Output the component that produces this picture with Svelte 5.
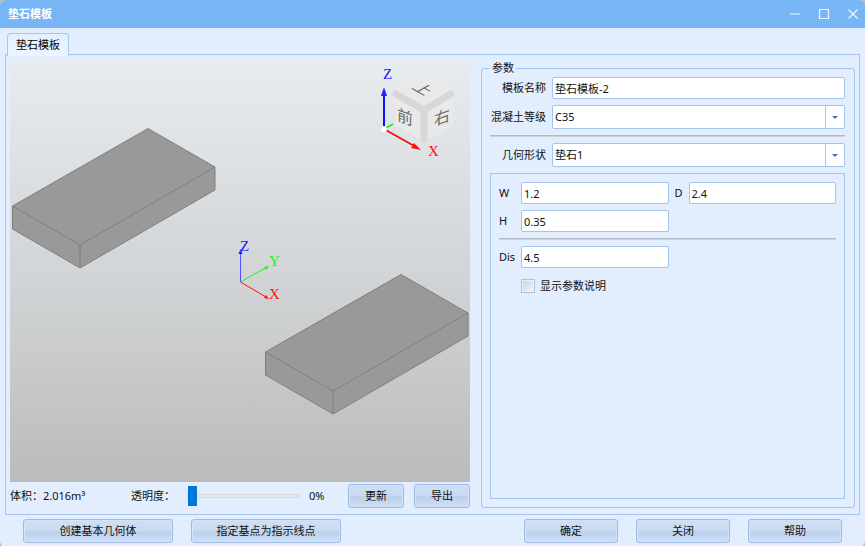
<script lang="ts">
	let name = "垫石模板-2";
	let grade = "C35";
	let shape = "垫石1";
	let opacity = 0;
	let showHelp = false;

	let size = { w: "1.2", d: "2.4", h: "0.35", dis: "4.5" };

	const slabs = [
		{ x: 2, y: 68 },
		{ x: 255, y: 214 },
	];
</script>

<main class="dialog">
	<header class="titlebar">
		<h1>垫石模板</h1>
		<div class="window-buttons">
			<button aria-label="最小化">
				<svg width="12" height="12" viewBox="0 0 12 12"><path d="M1 6h10" /></svg>
			</button>
			<button aria-label="最大化">
				<svg width="12" height="12" viewBox="0 0 12 12"><path d="M1.5 1.5h9v9h-9z" /></svg>
			</button>
			<button aria-label="关闭窗口">
				<svg width="12" height="12" viewBox="0 0 12 12"><path d="M1.5 1.5l9 9M10.5 1.5l-9 9" /></svg>
			</button>
		</div>
	</header>

	<nav class="tabs">
		<button class="tab active">垫石模板</button>
	</nav>

	<section class="panel">
		<div class="preview">
			<div class="viewport">
				<svg class="scene" viewBox="0 0 460 422">
					{#each slabs as slab}
						<g class="slab" transform="translate({slab.x} {slab.y})">
							<path d="M136 .5L203 39v23L68 140 .5 101V78z" />
							<path d="M.5 78L68 117l135-78M68 117v23" />
						</g>
					{/each}

					<g class="axes small">
						<path class="z" d="M230.5 222V192" />
						<path class="z tip" d="M230.5 189l2 5h-4z" />
						<path class="y" d="M230.5 222L257 207" />
						<path class="y tip" d="M259 206l-3 4-2-3z" />
						<path class="x" d="M230.5 222L256 237" />
						<path class="x tip" d="M259 239l-5-1 2-3z" />
						<text class="z" x="230" y="191">Z</text>
						<text class="y" x="259" y="206">Y</text>
						<text class="x" x="259" y="239">X</text>
					</g>

					<g class="cube">
						<path class="face" d="M415 12L444 31 442 66 414 82 386 64 383 31z" />
						<path class="edge" d="M386 34L414 50 441 34M414 50V79" />
						<text transform="matrix(.87 .5 -.87 .5 408 32)">上</text>
						<text transform="translate(395 63) skewY(20)">前</text>
						<text transform="translate(432 63) skewY(-20)">右</text>
					</g>

					<g class="axes big">
						<path class="y" d="M374 69l9-5" />
						<path class="z" d="M374 69V33" />
						<path class="z tip" d="M374 27l3 9h-6z" />
						<path class="x" d="M374 69l32 18" />
						<path class="x tip" d="M411 90l-10-2 3-5z" />
						<circle cx="374" cy="69" r="3" />
						<text class="z" x="373" y="19">Z</text>
						<text class="x" x="418" y="96">X</text>
					</g>
				</svg>
			</div>
			<div class="preview-bar">
				<span class="volume">体积：2.016m³</span>
				<label for="opacity">透明度：</label>
				<input id="opacity" type="range" min="0" max="100" bind:value={opacity} />
				<output for="opacity">{opacity}%</output>
				<div class="actions">
					<button class="btn">更新</button>
					<button class="btn">导出</button>
				</div>
			</div>
		</div>

		<fieldset>
			<legend>参数</legend>
			<div class="row">
				<label for="name">模板名称</label>
				<input id="name" type="text" bind:value={name} />
			</div>
			<div class="row">
				<label for="grade">混凝土等级</label>
				<div class="select">
					<select id="grade" bind:value={grade}>
						<option>C35</option>
					</select>
				</div>
			</div>
			<hr />
			<div class="row">
				<label for="shape">几何形状</label>
				<div class="select">
					<select id="shape" bind:value={shape}>
						<option>垫石1</option>
					</select>
				</div>
			</div>

			<div class="sizes">
				<label for="w">W</label>
				<input id="w" type="text" bind:value={size.w} />
				<label class="second" for="d">D</label>
				<input id="d" type="text" bind:value={size.d} />
				<label for="h">H</label>
				<input id="h" type="text" bind:value={size.h} />
				<hr />
				<label for="dis">Dis</label>
				<input id="dis" type="text" bind:value={size.dis} />
				<label class="check">
					<input type="checkbox" bind:checked={showHelp} />
					显示参数说明
				</label>
			</div>
		</fieldset>
	</section>

	<footer>
		<button class="btn wide">创建基本几何体</button>
		<button class="btn wide">指定基点为指示线点</button>
		<div class="confirm">
			<button class="btn">确定</button>
			<button class="btn">关闭</button>
			<button class="btn">帮助</button>
		</div>
	</footer>
</main>

<style>
	:global(body) {
		margin: 0;
		background: #b9bcc0;
	}

	.dialog {
		--line: #a3c4ee;
		--bg: #e2eefd;

		box-sizing: border-box;
		min-height: 100vh;
		display: flex;
		flex-direction: column;
		border-radius: 6px;
		overflow: hidden;
		background: var(--bg);
		color: #111111;
		font: 11px/16px "Noto Sans", "Noto Sans CJK SC", sans-serif;
	}
	.dialog * {
		box-sizing: border-box;
	}

	button,
	input,
	select {
		font: inherit;
		color: inherit;
		margin: 0;
	}

	.titlebar {
		display: flex;
		align-items: center;
		justify-content: space-between;
		height: 28px;
		padding: 0 6px 0 8px;
		background: #77b5f4;
		color: white;
	}
	.titlebar h1 {
		margin: 0;
		font-size: 11px;
		font-weight: bold;
	}
	.window-buttons {
		display: flex;
		gap: 17px;
	}
	.window-buttons button {
		display: flex;
		padding: 0;
		border: 0;
		background: none;
	}
	.window-buttons path {
		fill: none;
		stroke: #edf6ff;
		stroke-width: 1.2;
	}

	.tabs {
		display: flex;
		height: 27px;
		padding: 5px 7px 0;
	}
	.tab {
		z-index: 1;
		height: 23px;
		padding: 0 8px;
		border: 1px solid #9ccbf3;
		border-bottom: 0;
		border-radius: 4px 4px 0 0;
		background: linear-gradient(#e4effd, #ecf5ff);
		color: black;
	}

	.panel {
		flex: 1;
		display: grid;
		grid-template-columns: 460fr 374fr;
		gap: 11px;
		margin: -1px 5px 0;
		padding: 5px 4px;
		border: 1px solid var(--line);
	}

	.preview {
		display: flex;
		flex-direction: column;
	}
	.viewport {
		flex: 1;
		display: flex;
		background: linear-gradient(#e7ecef, #d2d5d7 50%, #bbbbbb);
	}
	.scene {
		width: 100%;
	}
	.slab path {
		fill: #999999;
		stroke: #7f7f7f;
		stroke-linejoin: round;
	}
	.slab path + path {
		fill: none;
	}

	.axes path {
		fill: none;
	}
	.axes text,
	.cube text {
		font-family: "Liberation Serif", "Noto Sans CJK SC", serif;
		font-size: 15px;
	}
	.x {
		stroke: #ff1010;
	}
	.y {
		stroke: #20f020;
	}
	.z {
		stroke: #1010f8;
	}
	.small path.z {
		stroke: #5050ff;
	}
	.axes text {
		stroke: none;
	}
	.axes text.x,
	.axes .x.tip {
		fill: #ff1010;
	}
	.axes text.y,
	.axes .y.tip {
		fill: #20f020;
	}
	.axes text.z,
	.axes .z.tip {
		fill: #2020ff;
	}
	.axes path.tip {
		stroke: none;
	}
	.big path {
		stroke-width: 2;
	}
	.big circle {
		fill: white;
	}
	.cube .face {
		fill: #e9e9e9;
		stroke: #e9e9e9;
		stroke-linejoin: round;
	}
	.cube .edge {
		fill: none;
		stroke: #d7d7d7;
		stroke-width: 7;
		stroke-linecap: round;
		stroke-linejoin: round;
	}
	.cube text {
		fill: #6c6c6c;
		font-size: 16px;
		text-anchor: middle;
	}

	.preview-bar {
		display: flex;
		align-items: center;
		height: 28px;
		margin-bottom: -1px;
	}
	.volume {
		width: 121px;
	}
	.preview-bar label {
		width: 56px;
	}
	.preview-bar output {
		margin-left: 10px;
	}
	.actions {
		display: flex;
		gap: 10px;
		margin-left: auto;
	}
	.actions .btn {
		width: 56px;
	}

	input[type="range"] {
		appearance: none;
		width: 112px;
		height: 20px;
		background: none;
	}
	input[type="range"]::-webkit-slider-runnable-track {
		height: 4px;
		border: 1px solid #d6d9dc;
		background: #e7eaea;
	}
	input[type="range"]::-webkit-slider-thumb {
		appearance: none;
		width: 9px;
		height: 20px;
		margin-top: -9px;
		background: #0078d7;
	}

	.btn {
		height: 24px;
		padding: 0;
		border: 1px solid #9dbbe6;
		border-radius: 3px;
		background: linear-gradient(#cfe0f5, #c7daf2 48%, #bbcfea 54%, #cfe0f6);
		box-shadow: inset 0 0 0 1px #d3e2f6;
	}
	.btn:hover {
		background: #d5e5f9;
	}

	fieldset {
		min-width: 0;
		display: flex;
		flex-direction: column;
		gap: 6px;
		margin: 0 0 1px;
		padding: 1px 9px 8px 8px;
		border: 1px solid var(--line);
		border-radius: 3px;
	}
	legend {
		padding: 0 2px;
	}
	hr {
		width: 100%;
		height: 2px;
		margin: 0;
		border: 0;
		border-top: 1px solid #b0b9c6;
		background: #cbd3dd;
	}

	.row {
		display: grid;
		grid-template-columns: 56px 1fr;
		gap: 6px;
		align-items: center;
	}
	.row label {
		text-align: right;
		white-space: nowrap;
	}

	input[type="text"],
	select {
		width: 100%;
		min-width: 0;
		height: 22px;
		padding: 0 2px;
		border: 1px solid var(--line);
		border-radius: 2px;
		background: white;
	}
	.select {
		position: relative;
		display: flex;
	}
	select {
		appearance: none;
		height: 24px;
		background: linear-gradient(var(--line), var(--line)) right 18px top / 1px 100% no-repeat white;
	}
	.select::after {
		content: "";
		position: absolute;
		right: 7px;
		top: 11px;
		border: 3px solid transparent;
		border-top-color: #4674b4;
		border-bottom: 0;
		pointer-events: none;
	}

	.sizes {
		flex: 1;
		display: grid;
		grid-template-columns: 22px 1fr 20px 1fr;
		row-gap: 6px;
		align-content: start;
		align-items: center;
		padding: 8px;
		border: 1px solid var(--line);
	}
	.sizes hr {
		grid-column: 1 / -1;
	}
	.sizes .second {
		padding-left: 6px;
	}
	#h,
	#dis {
		grid-column: 2;
	}
	.check {
		grid-column: 2 / -1;
		display: flex;
		align-items: center;
		gap: 5px;
		height: 24px;
	}
	.check input {
		appearance: none;
		width: 14px;
		height: 14px;
		border: 1px solid #adc3df;
		background: linear-gradient(135deg, #cdd3da, #f4f6f8);
		box-shadow: inset 0 0 0 1px #eaf0f6;
	}
	.check input:checked {
		background: #4674b4;
	}

	footer {
		display: flex;
		gap: 18px;
		padding: 4px 23px;
	}
	footer .wide {
		width: 150px;
	}
	.confirm {
		display: flex;
		gap: 18px;
		margin-left: auto;
	}
	.confirm .btn {
		width: 94px;
	}
</style>
